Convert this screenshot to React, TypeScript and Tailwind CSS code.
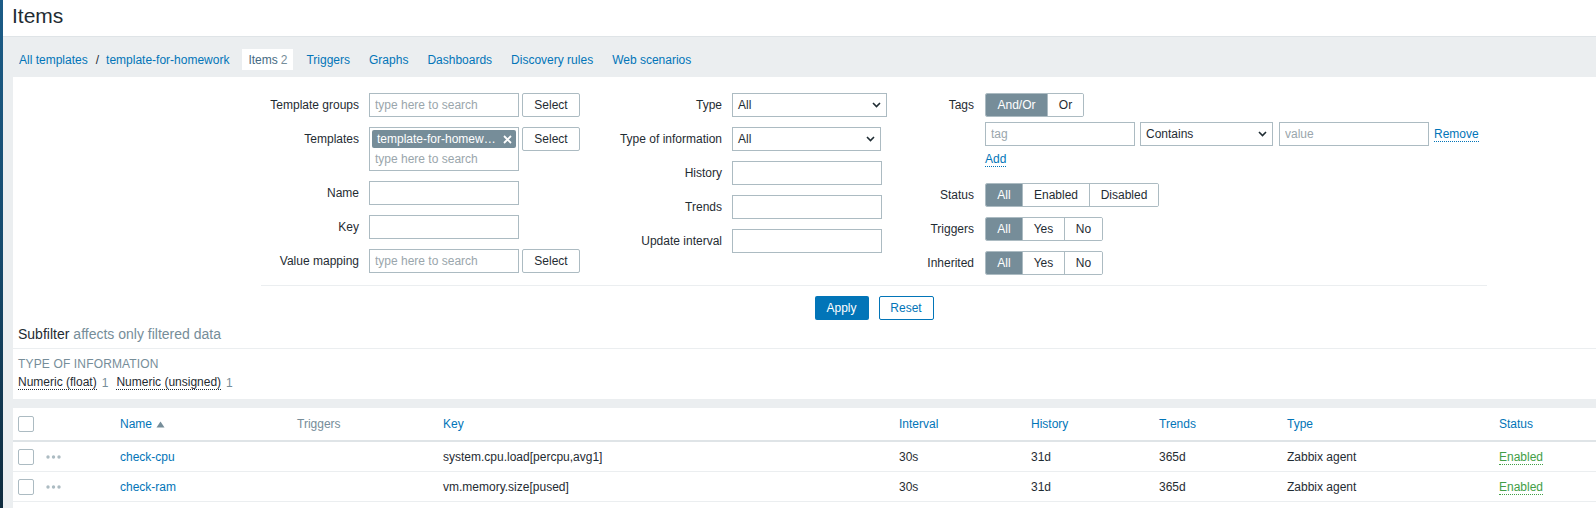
import type { ReactNode } from 'react';

function Chevron() {
  return (
    <svg width="9" height="6" viewBox="0 0 9 6" className="shrink-0">
      <path d="M1 1l3.5 3.5L8 1" fill="none" stroke="#1f2c33" strokeWidth={1.6} />
    </svg>
  );
}

function Label({ children }: { children: ReactNode }) {
  return <div className="flex h-[24px] items-center justify-end whitespace-nowrap text-[#1f2c33]">{children}</div>;
}

function TextBox({ className = '', placeholder }: { className?: string; placeholder?: string }) {
  return (
    <input
      type="text"
      placeholder={placeholder}
      className={`h-[24px] border border-[#acbbc2] bg-white px-[5px] text-[12px] text-[#1f2c33] outline-none placeholder:text-[#9aa6ac] ${className}`}
    />
  );
}

function SelectBtn() {
  return (
    <button className="h-[24px] w-[58px] rounded-[2px] border border-[#acbbc2] bg-white text-[12px] text-[#1f2c33]">
      Select
    </button>
  );
}

function Dropdown({ value, className = '' }: { value: string; className?: string }) {
  return (
    <div className={`flex h-[24px] items-center justify-between border border-[#acbbc2] bg-white pl-[5px] pr-[5px] text-[#1f2c33] ${className}`}>
      <span>{value}</span>
      <Chevron />
    </div>
  );
}

type Seg = { label: string; w: string; active?: boolean };

function Segmented({ options }: { options: Seg[] }) {
  return (
    <div className="flex h-[24px] w-fit overflow-hidden rounded-[2px] border border-[#acbbc2]">
      {options.map((o, i) => (
        <div
          key={o.label}
          className={`flex h-full items-center justify-center ${o.w} ${i > 0 ? 'border-l border-[#acbbc2]' : ''} ${
            o.active ? 'bg-[#768d99] text-white' : 'bg-white text-[#1f2c33]'
          }`}
        >
          {o.label}
        </div>
      ))}
    </div>
  );
}

function Dots() {
  return (
    <svg width="15" height="4" viewBox="0 0 15 4">
      <circle cx="2" cy="2" r="1.7" fill="#acbbc2" />
      <circle cx="7.5" cy="2" r="1.7" fill="#acbbc2" />
      <circle cx="13" cy="2" r="1.7" fill="#acbbc2" />
    </svg>
  );
}

function Checkbox() {
  return <div className="h-[16px] w-[16px] rounded-[2px] border border-[#acbbc2] bg-white" />;
}

const rows = [
  { name: 'check-cpu', key: 'system.cpu.load[percpu,avg1]' },
  { name: 'check-ram', key: 'vm.memory.size[pused]' },
];

const gridCols = 'grid grid-cols-[28px_74px_177px_146px_456px_132px_128px_128px_212px_1fr] items-center';

export default function App() {
  return (
    <div className="flex min-h-screen font-['Liberation_Sans',Arial,sans-serif] text-[12px] leading-[14px] text-[#1f2c33]">
      {/* sidebar edge */}
      <div className="w-[3px] shrink-0 bg-linear-to-b from-[#1c5c87] via-[#154a6d] to-[#0e2a3c]" />

      <div className="min-w-0 flex-1 bg-[#ebeef0]">
        {/* Header */}
        <header className="h-[37px] border-b border-[#dfe4e7] bg-white pl-[9px] pt-[5px]">
          <h1 className="text-[21px] leading-none text-[#1f2c33]">Items</h1>
        </header>

        <div className="pl-[10px]">
          {/* Nav */}
          <nav className="flex h-[40px] items-center pt-[5px] text-[#0275b8]">
            <span className="ml-[6px]">All templates</span>
            <span className="ml-[8px] mr-[7px] text-[#1f2c33]">/</span>
            <span>template-for-homework</span>
            <div className="ml-[13px] flex items-center gap-[7px]">
              <span className="flex h-[21px] items-center bg-white px-[6px] text-[#456a82]">
                Items<span className="ml-[3px] text-[#768d99]">2</span>
              </span>
              <span className="px-[6px]">Triggers</span>
              <span className="px-[6px]">Graphs</span>
              <span className="px-[6px]">Dashboards</span>
              <span className="px-[6px]">Discovery rules</span>
              <span className="px-[6px]">Web scenarios</span>
            </div>
          </nav>

          {/* Filter */}
          <section className="bg-white pt-[16px]">
            <div className="ml-[248px] w-[1226px]">
              <div className="flex items-start pb-[10px]">
                {/* Column 1 */}
                <div className="grid w-[319px] grid-cols-[98px_1fr] gap-x-[10px] gap-y-[10px]">
                  <Label>Template groups</Label>
                  <div className="flex gap-[3px]">
                    <TextBox className="w-[150px]" placeholder="type here to search" />
                    <SelectBtn />
                  </div>
                  <Label>Templates</Label>
                  <div className="flex items-start gap-[3px]">
                    <div className="h-[44px] w-[150px] border border-[#acbbc2] bg-white p-[2px]">
                      <div className="flex h-[18px] items-center justify-between rounded-[2px] bg-[#768d99] pl-[5px] pr-[4px] text-white">
                        <span className="whitespace-nowrap">template-for-homew…</span>
                        <svg width="9" height="9" viewBox="0 0 9 9">
                          <path d="M1 1l7 7M8 1L1 8" stroke="#fff" strokeWidth={1.8} />
                        </svg>
                      </div>
                      <div className="mt-[4px] pl-[3px] text-[#9aa6ac]">type here to search</div>
                    </div>
                    <SelectBtn />
                  </div>
                  <Label>Name</Label>
                  <TextBox className="w-[150px]" />
                  <Label>Key</Label>
                  <TextBox className="w-[150px]" />
                  <Label>Value mapping</Label>
                  <div className="flex gap-[3px]">
                    <TextBox className="w-[150px]" placeholder="type here to search" />
                    <SelectBtn />
                  </div>
                </div>

                {/* Column 2 */}
                <div className="ml-[20px] grid w-[287px] grid-cols-[122px_auto] gap-x-[10px] gap-y-[10px]">
                  <Label>Type</Label>
                  <Dropdown value="All" className="w-[155px]" />
                  <Label>Type of information</Label>
                  <Dropdown value="All" className="w-[149px]" />
                  <Label>History</Label>
                  <TextBox className="w-[150px]" />
                  <Label>Trends</Label>
                  <TextBox className="w-[150px]" />
                  <Label>Update interval</Label>
                  <TextBox className="w-[150px]" />
                </div>

                {/* Column 3 */}
                <div className="ml-[13px] grid grid-cols-[74px_auto] gap-x-[11px] gap-y-[10px]">
                  <Label>Tags</Label>
                  <div className="flex flex-col">
                    <Segmented
                      options={[
                        { label: 'And/Or', w: 'w-[61px]', active: true },
                        { label: 'Or', w: 'w-[36px]' },
                      ]}
                    />
                    <div className="mt-[5px] flex items-center">
                      <TextBox className="w-[150px]" placeholder="tag" />
                      <Dropdown value="Contains" className="ml-[5px] w-[133px]" />
                      <TextBox className="ml-[6px] w-[150px]" placeholder="value" />
                      <span className="ml-[5px] border-b border-dotted border-[#0275b8] text-[#0275b8]">Remove</span>
                    </div>
                    <div className="h-[27px] pt-[6px]">
                      <span className="inline-block border-b border-dotted border-[#0275b8] text-[#0275b8]">Add</span>
                    </div>
                  </div>
                  <Label>Status</Label>
                  <Segmented
                    options={[
                      { label: 'All', w: 'w-[36px]', active: true },
                      { label: 'Enabled', w: 'w-[67px]' },
                      { label: 'Disabled', w: 'w-[69px]' },
                    ]}
                  />
                  <Label>Triggers</Label>
                  <Segmented
                    options={[
                      { label: 'All', w: 'w-[36px]', active: true },
                      { label: 'Yes', w: 'w-[42px]' },
                      { label: 'No', w: 'w-[38px]' },
                    ]}
                  />
                  <Label>Inherited</Label>
                  <Segmented
                    options={[
                      { label: 'All', w: 'w-[36px]', active: true },
                      { label: 'Yes', w: 'w-[42px]' },
                      { label: 'No', w: 'w-[38px]' },
                    ]}
                  />
                </div>
              </div>

              <div className="border-t border-[#ebeef0]" />
              <div className="flex justify-center gap-[10px] pt-[10px]">
                <button className="h-[24px] w-[54px] rounded-[2px] bg-[#0275b8] text-[12px] text-white">Apply</button>
                <button className="h-[24px] w-[55px] rounded-[2px] border border-[#0275b8] bg-white text-[12px] text-[#0275b8]">
                  Reset
                </button>
              </div>
            </div>

            {/* Subfilter */}
            <div className="flex h-[29px] items-center border-b border-[#ebeef0] pl-[5px] text-[14px] leading-[17px]">
              <span className="text-[#1f2c33]">Subfilter</span>
              <span className="ml-[4px] text-[#768d99]">affects only filtered data</span>
            </div>
            <div className="px-[5px] pb-[9px] pt-[8px]">
              <div className="uppercase tracking-[0.15px] text-[#768d99]">Type of information</div>
              <div className="mt-[4px] flex items-center">
                <span className="border-b border-dotted border-[#1f2c33]">Numeric (float)</span>
                <span className="ml-[5px] text-[#768d99]">1</span>
                <span className="ml-[8px] border-b border-dotted border-[#1f2c33]">Numeric (unsigned)</span>
                <span className="ml-[5px] text-[#768d99]">1</span>
              </div>
            </div>
          </section>

          {/* Table */}
          <section className="mt-[9px] bg-white pb-[10px]">
            <div className={`${gridCols} h-[34px] border-b-2 border-[#dfe4e7]`}>
              <div className="pl-[5px]">
                <Checkbox />
              </div>
              <div />
              <div className="flex items-center pl-[5px] text-[#0275b8]">
                Name
                <svg width="9" height="7" viewBox="0 0 9 7" className="ml-[4px]">
                  <path d="M4.5 0.5L8.5 6.5H0.5Z" fill="#768d99" />
                </svg>
              </div>
              <div className="pl-[5px] text-[#768d99]">Triggers</div>
              <div className="pl-[5px] text-[#0275b8]">Key</div>
              <div className="pl-[5px] text-[#0275b8]">Interval</div>
              <div className="pl-[5px] text-[#0275b8]">History</div>
              <div className="pl-[5px] text-[#0275b8]">Trends</div>
              <div className="pl-[5px] text-[#0275b8]">Type</div>
              <div className="pl-[5px] text-[#0275b8]">Status</div>
            </div>
            {rows.map((r) => (
              <div key={r.name} className={`${gridCols} h-[30px] border-b border-[#ebeef0]`}>
                <div className="pl-[5px]">
                  <Checkbox />
                </div>
                <div className="flex items-center pl-[5px]">
                  <Dots />
                </div>
                <div className="pl-[5px] text-[#0275b8]">{r.name}</div>
                <div />
                <div className="pl-[5px]">{r.key}</div>
                <div className="pl-[5px]">30s</div>
                <div className="pl-[5px]">31d</div>
                <div className="pl-[5px]">365d</div>
                <div className="pl-[5px]">Zabbix agent</div>
                <div className="pl-[5px]">
                  <span className="border-b border-dotted border-[#429e47] text-[#429e47]">Enabled</span>
                </div>
              </div>
            ))}
          </section>
        </div>
      </div>
    </div>
  );
}
